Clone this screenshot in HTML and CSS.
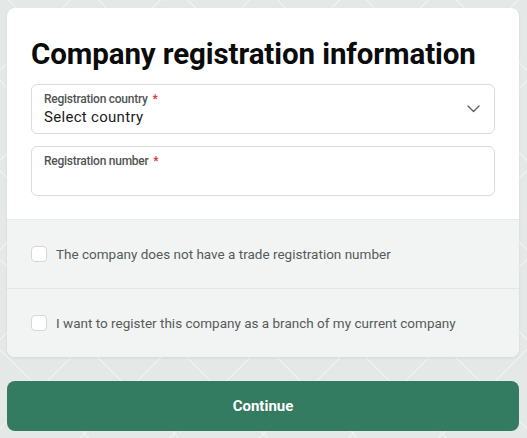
FILE: index.html
```html
<!DOCTYPE html>
<html>
<head>
<meta charset="utf-8">
<link rel="stylesheet" href="styles.css">
</head>
<body>
<div class="page">
  <div class="card">
    <div class="card-main">
      <h1 class="title">Company registration information</h1>
      <div class="field field-select">
        <div class="field-body">
          <div class="label">Registration country <span class="req">*</span></div>
          <div class="value">Select country</div>
        </div>
        <svg class="chev" width="13" height="8" viewBox="0 0 13 8"><path d="M1 1l5.5 5.5L12 1" fill="none" stroke="#5a5f5d" stroke-width="1.3" stroke-linecap="round" stroke-linejoin="round"/></svg>
      </div>
      <div class="field">
        <div class="field-body">
          <div class="label">Registration number <span class="req">*</span></div>
        </div>
      </div>
    </div>
    <div class="card-options">
      <label class="option"><span class="box"></span><span class="opt-text">The company does not have a trade registration number</span></label>
      <label class="option"><span class="box"></span><span class="opt-text">I want to register this company as a branch of my current company</span></label>
    </div>
  </div>
  <button class="btn">Continue</button>
</div>
</body>
</html>
```
FILE: styles.css
```css
html, body {
  margin: 0;
  height: 100%;
}
body {
  font-family: Roboto, "Liberation Sans", sans-serif;
  background-color: #e4e8e6;
  background-image:
    repeating-linear-gradient(45deg, transparent 0 62px, rgba(255,255,255,0.4) 62px 63.3px),
    repeating-linear-gradient(-45deg, transparent 0 62px, rgba(255,255,255,0.4) 62px 63.3px);
}
.page {
  padding: 8px 8px 0 7px;
}
.card {
  background: #fff;
  border-radius: 8px;
  box-shadow: 0 1px 3px rgba(0,0,0,0.08);
  overflow: hidden;
}
.card-main {
  padding: 28px 24px 23px;
  display: flex;
  flex-direction: column;
  gap: 12px;
}
.title {
  margin: 0;
  font-size: 29.5px;
  line-height: 36px;
  font-weight: 700;
  color: #0b0b0b;
  letter-spacing: -0.1px;
}
.field {
  height: 50px;
  box-sizing: border-box;
  border: 1px solid #d8dcda;
  border-radius: 6px;
  display: flex;
  align-items: center;
  padding: 0 14px 0 12px;
}
.field-body {
  flex: 1;
  align-self: flex-start;
  padding-top: 6px;
}
.label {
  font-size: 12px;
  line-height: 16px;
  color: #505553;
  letter-spacing: -0.25px;
  font-weight: 500;
}
.req {
  color: #d6362e;
  margin-left: 2px;
}
.value {
  font-size: 15px;
  line-height: 20px;
  color: #1c1c1c;
  letter-spacing: 0.3px;
}
.chev {
  display: block;
}
.card-options {
  background: #f1f4f3;
  border-top: 1px solid #e6eae8;
}
.option {
  height: 68px;
  display: flex;
  align-items: center;
  gap: 9px;
  padding: 0 24px;
}
.option + .option {
  border-top: 1px solid #e2e6e4;
}
.box {
  width: 16px;
  height: 16px;
  box-sizing: border-box;
  border: 1px solid #d3d7d5;
  border-radius: 4px;
  background: #fff;
  flex: none;
}
.opt-text {
  font-size: 13.5px;
  color: #565b59;
  letter-spacing: 0px;
}
.btn {
  display: block;
  width: 100%;
  margin-top: 24px;
  height: 50px;
  border: none;
  border-radius: 8px;
  background: #337b61;
  color: #fff;
  font-family: Roboto, "Liberation Sans", sans-serif;
  font-size: 15px;
  font-weight: 700;
}
```
